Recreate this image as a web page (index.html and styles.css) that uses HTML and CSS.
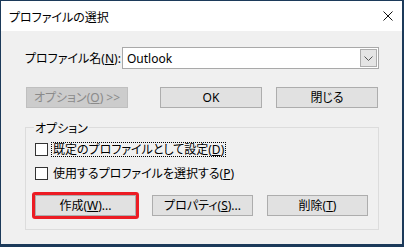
FILE: index.html
```html
<!DOCTYPE html>
<html lang="ja">
<head>
<meta charset="utf-8">
<link rel="stylesheet" href="styles.css">
</head>
<body>
<div class="window">
  <div class="titlebar">
    <span class="title">プロファイルの選択</span>
    <svg class="close" width="10" height="10" viewBox="0 0 10 10"><path d="M0.5 0.5 L9.5 9.5 M9.5 0.5 L0.5 9.5" stroke="#111" stroke-width="1" fill="none"/></svg>
  </div>
  <div class="content">
    <div class="row-profile">
      <span class="label">プロファイル名(<u>N</u>):</span>
      <div class="combo">
        <span class="combo-text">Outlook</span>
        <span class="combo-btn"><svg width="9" height="5" viewBox="0 0 9 5"><path d="M0.5 0.5 L4.5 4.5 L8.5 0.5" stroke="#555" stroke-width="1" fill="none"/></svg></span>
      </div>
    </div>
    <div class="row-buttons">
      <button class="btn btn-disabled btn-options">オプション(<u>O</u>) &gt;&gt;</button>
      <button class="btn btn-ok">OK</button>
      <button class="btn btn-close">閉じる</button>
    </div>
    <div class="group">
      <span class="legend">オプション</span>
      <div class="check-row check-first">
        <span class="box"></span>
        <span class="check-label focus">既定のプロファイルとして設定(<u>D</u>)</span>
      </div>
      <div class="check-row check-second">
        <span class="box"></span>
        <span class="check-label">使用するプロファイルを選択する(<u>P</u>)</span>
      </div>
      <div class="group-buttons">
        <span class="highlight"><button class="btn">作成(<u>W</u>)...</button></span>
        <button class="btn btn-prop">プロパティ(<u>S</u>)...</button>
        <button class="btn btn-del">削除(<u>T</u>)</button>
      </div>
    </div>
  </div>
</div>
</body>
</html>
```

FILE: styles.css
```css
html, body {
  margin: 0;
  padding: 0;
}
body {
  font-family: "Noto Sans", "Noto Sans CJK JP", sans-serif;
  font-size: 12px;
  color: #000;
  background: #1c3a5a;
}
.window {
  width: 404px;
  height: 247px;
  box-sizing: border-box;
  border-style: solid;
  border-color: #1c3a5a;
  border-width: 1px 2px 3px 1px;
  display: flex;
  flex-direction: column;
}
.titlebar {
  height: 30px;
  flex: none;
  background: #fff;
  display: flex;
  align-items: center;
  justify-content: space-between;
  padding: 0 9px 0 8px;
}
.title {
  font-family: "Noto Sans CJK JP", sans-serif;
  font-feature-settings: "palt";
  font-size: 12px;
  color: #000;
}
.close {
  display: block;
}
.content {
  flex: 1;
  background: #f0f0f0;
  padding: 16px 0 0 24px;
  font-feature-settings: "palt";
}
.row-profile {
  display: flex;
  align-items: center;
  height: 22px;
}
.label {
  width: 97px;
  flex: none;
}
.combo {
  width: 257px;
  height: 22px;
  box-sizing: border-box;
  border: 1px solid #a9a9a9;
  background: #fff;
  display: flex;
  align-items: center;
  justify-content: space-between;
  padding: 0 1px 0 4px;
}
.combo-text {
  font-family: "Noto Sans", sans-serif;
}
.combo-btn {
  width: 17px;
  height: 18px;
  box-sizing: border-box;
  border: 1px solid #adadad;
  background: #e5e5e5;
  display: flex;
  align-items: center;
  justify-content: center;
}
.combo-btn svg {
  display: block;
}
.row-buttons {
  display: flex;
  margin-top: 18px;
}
.btn {
  font: inherit;
  font-feature-settings: "palt";
  color: #000;
  width: 102px;
  height: 21px;
  box-sizing: border-box;
  border: 1px solid #adadad;
  background: #e1e1e1;
  padding: 0;
  margin: 0;
  display: flex;
  align-items: center;
  justify-content: center;
  line-height: 1;
}
.btn-options {
  margin-left: 1px;
}
.btn-disabled {
  background: #cccccc;
  border-color: #bfbfbf;
  color: #8a8a8a;
}
.btn-ok {
  margin-left: 32px;
}
.btn-close {
  margin-left: 14px;
}
.group {
  position: relative;
  margin-top: 19px;
  width: 354px;
  height: 103px;
  box-sizing: border-box;
  border: 1px solid #dcdcdc;
  padding: 14px 0 0 9px;
}
.legend {
  position: absolute;
  top: -9px;
  left: 8px;
  padding: 0 1px;
  background: #f0f0f0;
}
.check-row {
  display: flex;
  align-items: center;
  height: 15px;
}
.check-second {
  margin-top: 9px;
}
.box {
  width: 13px;
  height: 13px;
  box-sizing: border-box;
  border: 1px solid #333;
  background: #fff;
  flex: none;
}
.check-label {
  margin-left: 3px;
  padding: 0 1px;
  border: 1px dotted transparent;
  line-height: 13px;
}
.check-label.focus {
  border-color: #000;
}
.group-buttons {
  display: flex;
  align-items: center;
  margin-top: 11px;
}
.highlight {
  display: block;
  margin-left: -3px;
  border: 3px solid #ec1c24;
  border-radius: 3px;
}
.highlight .btn {
  width: 101px;
}
.btn-prop {
  margin-left: 13px;
  width: 101px;
}
.btn-del {
  margin-left: 14px;
  width: 101px;
}
```
